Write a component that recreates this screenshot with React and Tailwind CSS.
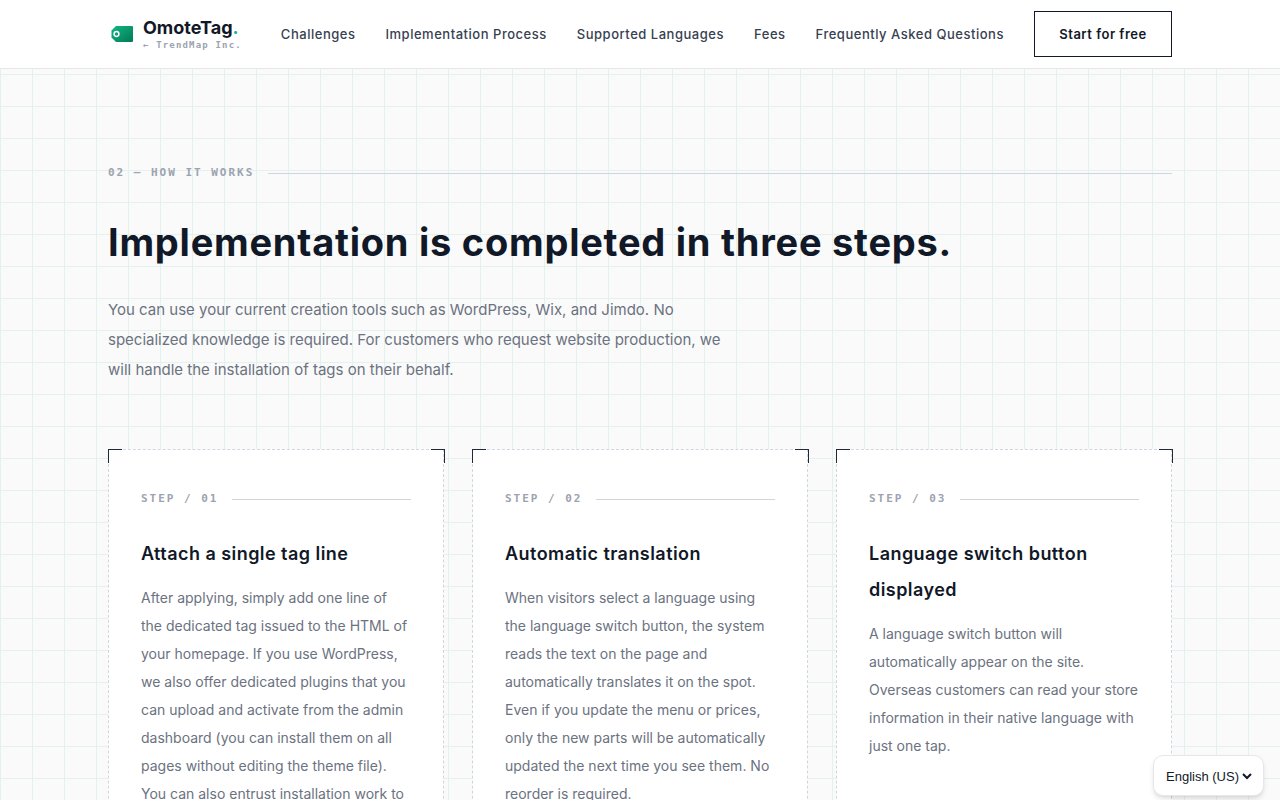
import React from "react";

const nav = ["Challenges", "Implementation Process", "Supported Languages", "Fees", "Frequently Asked Questions"];

const steps = [
  {
    no: "01",
    title: "Attach a single tag line",
    body: "After applying, simply add one line of the dedicated tag issued to the HTML of your homepage. If you use WordPress, we also offer dedicated plugins that you can upload and activate from the admin dashboard (you can install them on all pages without editing the theme file). You can also entrust installation work to us.",
  },
  {
    no: "02",
    title: "Automatic translation",
    body: "When visitors select a language using the language switch button, the system reads the text on the page and automatically translates it on the spot. Even if you update the menu or prices, only the new parts will be automatically updated the next time you see them. No reorder is required.",
  },
  {
    no: "03",
    title: "Language switch button displayed",
    body: "A language switch button will automatically appear on the site. Overseas customers can read your store information in their native language with just one tap.",
  },
];

const Logo = () => (
  <svg width="23" height="18" viewBox="0 0 23 18" className="shrink-0">
    <defs>
      <linearGradient id="tag" x1="0" y1="0" x2="1" y2="1">
        <stop offset="0" stopColor="#10b981" />
        <stop offset="1" stopColor="#047857" />
      </linearGradient>
    </defs>
    <path d="M5 1H21a1 1 0 0 1 1 1V16a1 1 0 0 1-1 1H5L0.5 12.5V5.5Z" fill="url(#tag)" />
    <circle cx="5.5" cy="9" r="2.4" fill="none" stroke="#fff" strokeWidth="1.5" />
  </svg>
);

const Corner = ({ className }) => <span className={`absolute w-[14px] h-[14px] border-[#1f2937] ${className}`} />;

const StepCard = ({ step }) => (
  <article className="relative bg-white border border-dashed border-[#d1d5e0] px-8 pt-[41px] pb-8">
    <Corner className="-top-px -left-px border-t border-l" />
    <Corner className="-top-px -right-[2px] border-t border-r" />
    <div className="flex items-center gap-[14px] mb-[29px]">
      <span className="font-['DejaVu_Sans_Mono',monospace] text-[11px] leading-[16px] font-bold tracking-[0.18em] text-[#9ca3af]">
        STEP / {step.no}
      </span>
      <span className="flex-1 h-px bg-[#d1d5db]" />
    </div>
    <h3 className="text-[18px] leading-[36px] font-semibold tracking-[0.025em] text-[#111827] mb-[12px]">{step.title}</h3>
    <p className="text-[14px] leading-[28px] text-[#6b7280]">{step.body}</p>
  </article>
);

export default function App() {
  return (
    <div className="h-screen overflow-hidden flex flex-col font-['Inter',sans-serif] bg-[#fafafa] transform-gpu">
      <header className="h-[69px] shrink-0 bg-white border-b border-[#e5e7eb]">
        <div className="h-full mx-[108px] flex items-center justify-between">
          <div className="flex items-center gap-[9px] pl-[3px]">
            <Logo />
            <div>
              <div className="text-[18px] leading-[20px] font-bold text-[#111827]">
                OmoteTag<span className="text-[#10b981]">.</span>
              </div>
              <div className="font-['DejaVu_Sans_Mono',monospace] text-[9px] leading-[12px] mt-[1px] font-bold tracking-[0.13em] text-[#9ca3af]">
                ← TrendMap Inc.
              </div>
            </div>
          </div>
          <nav className="flex items-center gap-[30px]">
            {nav.map((item) => (
              <a key={item} className="pt-[2px] text-[13px] font-medium tracking-[0.04em] text-[#374151]">
                {item}
              </a>
            ))}
            <button className="w-[138px] h-[46px] pt-[2px] border border-[#111827] text-[13px] font-semibold tracking-[0.04em] text-[#111827]">
              Start for free
            </button>
          </nav>
        </div>
      </header>

      <main className="flex-1 bg-[linear-gradient(to_right,#e3f2ee_1px,transparent_1px),linear-gradient(to_bottom,#e3f2ee_1px,transparent_1px)] bg-[size:32px_32px] bg-[position:0_5px]">
        <section className="mx-[108px] pt-[96px]">
          <div className="flex items-center gap-[14px] mb-[37px]">
            <span className="font-['DejaVu_Sans_Mono',monospace] text-[11px] leading-[16px] font-bold tracking-[0.18em] text-[#9ca3af]">
              02 — HOW IT WORKS
            </span>
            <span className="flex-1 h-px bg-[#d1d5db]" />
          </div>
          <h2 className="text-[38px] leading-[48px] font-bold tracking-[0.02em] text-[#111827] mb-[29px]">
            Implementation is completed in three steps.
          </h2>
          <p className="max-w-[620px] text-[15px] leading-[30px] text-[#6b7280] mb-[64px]">
            You can use your current creation tools such as WordPress, Wix, and Jimdo. No specialized knowledge is required. For customers who request website production, we will handle the installation of tags on their behalf.
          </p>
          <div className="grid grid-cols-3 gap-[28px]">
            {steps.map((step) => (
              <StepCard key={step.no} step={step} />
            ))}
          </div>
        </section>
      </main>

      <div className="fixed right-4 bottom-[4px] bg-white border border-[#e5e7eb] rounded-[10px] shadow-md px-2 pt-[12px] pb-[10px] leading-none">
        <select className="block w-[93px] font-['Liberation_Sans',sans-serif] text-[13px] text-[#111827] outline-none bg-white">
          <option>English (US)</option>
        </select>
      </div>
    </div>
  );
}
